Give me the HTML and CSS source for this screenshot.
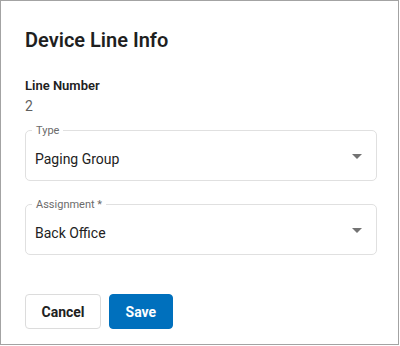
FILE: index.html
```html
<!DOCTYPE html>
<html lang="en">
<head>
<meta charset="utf-8">
<title>Device Line Info</title>
<link rel="stylesheet" href="styles.css">
</head>
<body>
<div class="dialog">
  <h2 class="title">Device Line Info</h2>
  <div class="info">
    <div class="info-label">Line Number</div>
    <div class="info-value">2</div>
  </div>
  <div class="field first">
    <span class="field-label">Type</span>
    <span class="field-value">Paging Group</span>
    <svg class="arrow" width="24" height="24" viewBox="0 0 24 24"><path d="M7 10l5 5 5-5z"/></svg>
  </div>
  <div class="field">
    <span class="field-label">Assignment *</span>
    <span class="field-value">Back Office</span>
    <svg class="arrow" width="24" height="24" viewBox="0 0 24 24"><path d="M7 10l5 5 5-5z"/></svg>
  </div>
  <div class="actions">
    <button class="btn btn-cancel">Cancel</button>
    <button class="btn btn-save">Save</button>
  </div>
</div>
</body>
</html>
```

FILE: styles.css
```css
html, body {
  margin: 0;
  padding: 0;
  background: #ffffff;
}

.dialog {
  box-sizing: border-box;
  width: 399px;
  height: 345px;
  border: 1px solid #a3a3a3;
  background: #ffffff;
  padding: 27px 0 0 24px;
  font-family: Roboto, "Liberation Sans", sans-serif;
  color: #212121;
}

.title {
  margin: 0;
  font-size: 20px;
  line-height: 24px;
  font-weight: 600;
  color: #1f1f1f;
}

.info {
  margin-top: 26px;
}

.info-label {
  font-size: 13px;
  line-height: 16px;
  font-weight: 600;
  color: #212121;
}

.info-value {
  margin-top: 2px;
  font-size: 14px;
  line-height: 20px;
  color: #5f5f5f;
}

.field {
  position: relative;
  box-sizing: border-box;
  width: 352px;
  height: 51px;
  margin-top: 23px;
  border: 1px solid #e0e0e0;
  border-radius: 5px;
  display: flex;
  align-items: flex-start;
}

.field.first {
  margin-top: 14px;
}

.field-label {
  position: absolute;
  top: -7px;
  left: 6px;
  padding: 0 4px;
  background: #ffffff;
  font-size: 11px;
  line-height: 13px;
  color: #6b6b6b;
}

.field-value {
  flex: 1;
  padding: 18px 0 0 9px;
  font-size: 14px;
  line-height: 20px;
  color: #222222;
}

.arrow {
  align-self: center;
  margin-right: 7px;
  fill: #737373;
}

.actions {
  display: flex;
  gap: 8px;
  margin-top: 39px;
}

.btn {
  box-sizing: border-box;
  height: 35px;
  padding: 0 15.5px;
  border-radius: 4px;
  font-family: Roboto, "Liberation Sans", sans-serif;
  font-size: 14px;
  font-weight: 700;
  cursor: pointer;
}

.btn-cancel {
  background: #ffffff;
  border: 1px solid #dcdcdc;
  color: #212121;
}

.btn-save {
  background: #0070bd;
  border: 1px solid #0070bd;
  color: #ffffff;
}
```
